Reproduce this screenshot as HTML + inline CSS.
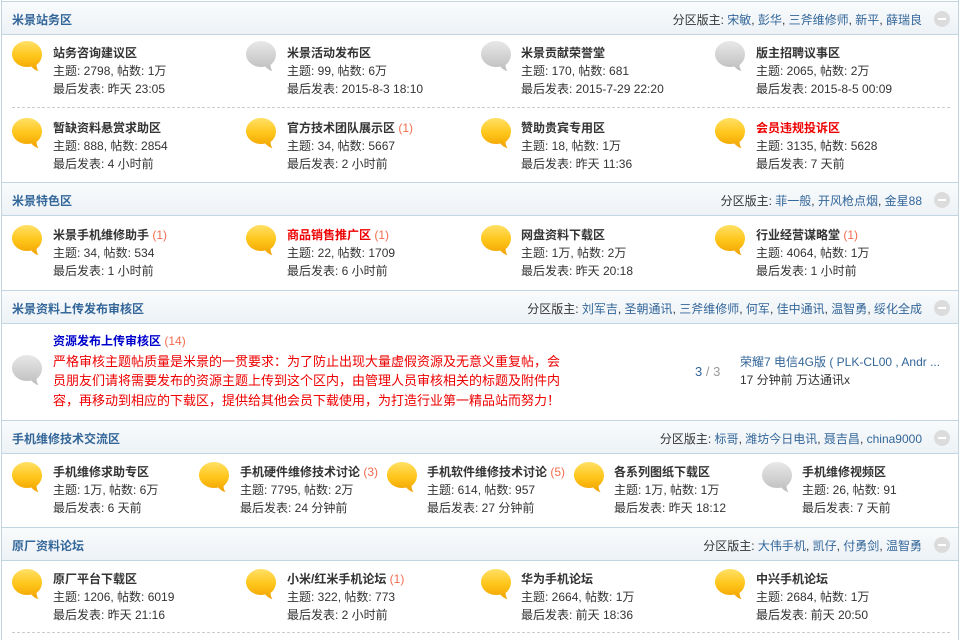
<!DOCTYPE html>
<html><head><meta charset="utf-8"><style>
*{margin:0;padding:0;box-sizing:border-box}
body{width:961px;height:636px;overflow:hidden;background:#fff;font-family:"Liberation Sans","Noto Sans CJK SC",sans-serif;font-size:12px;color:#333;position:relative}
#wrap{position:absolute;left:1px;top:0;width:958px;height:640px;border-left:1px solid #c2d5e3;border-right:1px solid #c2d5e3}
.h{position:absolute;left:0;width:956px;height:34px;border-top:1px solid #c2d5e3;border-bottom:1px solid #c2d5e3;background:linear-gradient(#f9fbfc,#edf2f6)}
.h b{position:absolute;left:10px;top:9px;font-size:12px;color:#336699;font-weight:bold}
.h .m{position:absolute;right:36px;top:9px;color:#333}
.h .m a{color:#336699}
.h i{position:absolute;right:8px;top:9px;width:16px;height:16px;border-radius:50%;background:#dcdcdc}
.h i:after{content:"";position:absolute;left:4px;top:7px;width:8px;height:2px;background:#fff}
.it{position:absolute;line-height:18px;white-space:nowrap}
.it .t{font-weight:bold;color:#333}
.it .t.r{color:#e00}
.it span.n{color:#f26c4f;font-weight:normal}
.ic{position:absolute;width:32px;height:32px}
.d{position:absolute;left:10px;width:938px;border-top:1px dashed #cdcdcd}
</style></head><body>
<svg width="0" height="0" style="position:absolute"><defs>
<linearGradient id="y" x1="0" y1="0" x2="0" y2="1"><stop offset="0" stop-color="#ffe066"/><stop offset=".5" stop-color="#ffc61a"/><stop offset="1" stop-color="#f0a000"/></linearGradient>
<linearGradient id="g" x1="0" y1="0" x2="0" y2="1"><stop offset="0" stop-color="#e8e8e8"/><stop offset="1" stop-color="#bdbdbd"/></linearGradient>
<symbol id="by" viewBox="0 0 32 32"><path d="M16 1C7.7 1 1 6.9 1 14s6.7 13 15 13c1.5 0 2.9-.2 4.3-.5 1.8 2.2 4.2 3.9 7.2 4.7-1.3-1.9-2-4-1.9-6.3C29 22.4 31 18.5 31 14 31 6.9 24.3 1 16 1z" fill="url(#y)"/></symbol>
<symbol id="bg" viewBox="0 0 32 32"><path d="M16 1C7.7 1 1 6.9 1 14s6.7 13 15 13c1.5 0 2.9-.2 4.3-.5 1.8 2.2 4.2 3.9 7.2 4.7-1.3-1.9-2-4-1.9-6.3C29 22.4 31 18.5 31 14 31 6.9 24.3 1 16 1z" fill="url(#g)"/></symbol>
</defs></svg>
<div id="wrap">
<div class="h" style="top:1px"><b>米景站务区</b><span class="m">分区版主: <a>宋敏</a>, <a>彭华</a>, <a>三斧维修师</a>, <a>新平</a>, <a>薛瑞良</a></span><i></i></div>
<div class="h" style="top:182px"><b>米景特色区</b><span class="m">分区版主: <a>菲一般</a>, <a>开风枪点烟</a>, <a>金星88</a></span><i></i></div>
<div class="h" style="top:290px"><b>米景资料上传发布审核区</b><span class="m">分区版主: <a>刘军吉</a>, <a>圣朝通讯</a>, <a>三斧维修师</a>, <a>何军</a>, <a>佳中通讯</a>, <a>温智勇</a>, <a>绥化全成</a></span><i></i></div>
<div class="h" style="top:420px"><b>手机维修技术交流区</b><span class="m">分区版主: <a>标哥</a>, <a>潍坊今日电讯</a>, <a>聂吉昌</a>, <a>china9000</a></span><i></i></div>
<div class="h" style="top:527px"><b>原厂资料论坛</b><span class="m">分区版主: <a>大伟手机</a>, <a>凯仔</a>, <a>付勇剑</a>, <a>温智勇</a></span><i></i></div>
<div class="d" style="top:107px"></div>
<div class="d" style="top:632px"></div>
</div>

<svg class="ic" style="left:11px;top:40px"><use href="#by" width="32" height="32"/></svg>
<div class="it" style="left:53px;top:44px"><div class="t">站务咨询建议区</div><div>主题: 2798, 帖数: 1万</div><div>最后发表: 昨天 23:05</div></div>
<svg class="ic" style="left:245px;top:40px"><use href="#bg" width="32" height="32"/></svg>
<div class="it" style="left:287px;top:44px"><div class="t">米景活动发布区</div><div>主题: 99, 帖数: 6万</div><div>最后发表: 2015-8-3 18:10</div></div>
<svg class="ic" style="left:480px;top:40px"><use href="#bg" width="32" height="32"/></svg>
<div class="it" style="left:521px;top:44px"><div class="t">米景贡献荣誉堂</div><div>主题: 170, 帖数: 681</div><div>最后发表: 2015-7-29 22:20</div></div>
<svg class="ic" style="left:714px;top:40px"><use href="#bg" width="32" height="32"/></svg>
<div class="it" style="left:756px;top:44px"><div class="t">版主招聘议事区</div><div>主题: 2065, 帖数: 2万</div><div>最后发表: 2015-8-5 00:09</div></div>

<svg class="ic" style="left:11px;top:117px"><use href="#by" width="32" height="32"/></svg>
<div class="it" style="left:53px;top:119px"><div class="t">暂缺资料悬赏求助区</div><div>主题: 888, 帖数: 2854</div><div>最后发表: 4 小时前</div></div>
<svg class="ic" style="left:245px;top:117px"><use href="#by" width="32" height="32"/></svg>
<div class="it" style="left:287px;top:119px"><div class="t">官方技术团队展示区 <span class="n">(1)</span></div><div>主题: 34, 帖数: 5667</div><div>最后发表: 2 小时前</div></div>
<svg class="ic" style="left:480px;top:117px"><use href="#by" width="32" height="32"/></svg>
<div class="it" style="left:521px;top:119px"><div class="t">赞助贵宾专用区</div><div>主题: 18, 帖数: 1万</div><div>最后发表: 昨天 11:36</div></div>
<svg class="ic" style="left:714px;top:117px"><use href="#by" width="32" height="32"/></svg>
<div class="it" style="left:756px;top:119px"><div class="t r">会员违规投诉区</div><div>主题: 3135, 帖数: 5628</div><div>最后发表: 7 天前</div></div>

<svg class="ic" style="left:11px;top:224px"><use href="#by" width="32" height="32"/></svg>
<div class="it" style="left:53px;top:226px"><div class="t">米景手机维修助手 <span class="n">(1)</span></div><div>主题: 34, 帖数: 534</div><div>最后发表: 1 小时前</div></div>
<svg class="ic" style="left:245px;top:224px"><use href="#by" width="32" height="32"/></svg>
<div class="it" style="left:287px;top:226px"><div class="t r">商品销售推广区 <span class="n">(1)</span></div><div>主题: 22, 帖数: 1709</div><div>最后发表: 6 小时前</div></div>
<svg class="ic" style="left:480px;top:224px"><use href="#by" width="32" height="32"/></svg>
<div class="it" style="left:521px;top:226px"><div class="t">网盘资料下载区</div><div>主题: 1万, 帖数: 2万</div><div>最后发表: 昨天 20:18</div></div>
<svg class="ic" style="left:714px;top:224px"><use href="#by" width="32" height="32"/></svg>
<div class="it" style="left:756px;top:226px"><div class="t">行业经营谋略堂 <span class="n">(1)</span></div><div>主题: 4064, 帖数: 1万</div><div>最后发表: 1 小时前</div></div>

<svg class="ic" style="left:11px;top:354px"><use href="#bg" width="32" height="32"/></svg>
<div class="it" style="left:53px;top:332px;line-height:19.5px"><div class="t" style="color:#0000cc">资源发布上传审核区 <span class="n">(14)</span></div><div style="color:#e00;font-size:13px">严格审核主题帖质量是米景的一贯要求：为了防止出现大量虚假资源及无意义重复帖，会<br>员朋友们请将需要发布的资源主题上传到这个区内，由管理人员审核相关的标题及附件内<br>容，再移动到相应的下载区，提供给其他会员下载使用，为打造行业第一精品站而努力！</div></div>
<div class="it" style="left:695px;top:363px;color:#336699;font-size:13px">3 <span style="color:#999">/ 3</span></div>
<div class="it" style="left:740px;top:353px"><div style="color:#336699">荣耀7 电信4G版 ( PLK-CL00 , Andr ...</div><div>17 分钟前 万达通讯x</div></div>

<svg class="ic" style="left:11px;top:461px"><use href="#by" width="32" height="32"/></svg>
<div class="it" style="left:53px;top:463px"><div class="t">手机维修求助专区</div><div>主题: 1万, 帖数: 6万</div><div>最后发表: 6 天前</div></div>
<svg class="ic" style="left:198px;top:461px"><use href="#by" width="32" height="32"/></svg>
<div class="it" style="left:240px;top:463px"><div class="t">手机硬件维修技术讨论 <span class="n">(3)</span></div><div>主题: 7795, 帖数: 2万</div><div>最后发表: 24 分钟前</div></div>
<svg class="ic" style="left:386px;top:461px"><use href="#by" width="32" height="32"/></svg>
<div class="it" style="left:427px;top:463px"><div class="t">手机软件维修技术讨论 <span class="n">(5)</span></div><div>主题: 614, 帖数: 957</div><div>最后发表: 27 分钟前</div></div>
<svg class="ic" style="left:573px;top:461px"><use href="#by" width="32" height="32"/></svg>
<div class="it" style="left:614px;top:463px"><div class="t">各系列图纸下载区</div><div>主题: 1万, 帖数: 1万</div><div>最后发表: 昨天 18:12</div></div>
<svg class="ic" style="left:761px;top:461px"><use href="#bg" width="32" height="32"/></svg>
<div class="it" style="left:802px;top:463px"><div class="t">手机维修视频区</div><div>主题: 26, 帖数: 91</div><div>最后发表: 7 天前</div></div>

<svg class="ic" style="left:11px;top:568px"><use href="#by" width="32" height="32"/></svg>
<div class="it" style="left:53px;top:570px"><div class="t">原厂平台下载区</div><div>主题: 1206, 帖数: 6019</div><div>最后发表: 昨天 21:16</div></div>
<svg class="ic" style="left:245px;top:568px"><use href="#by" width="32" height="32"/></svg>
<div class="it" style="left:287px;top:570px"><div class="t">小米/红米手机论坛 <span class="n">(1)</span></div><div>主题: 322, 帖数: 773</div><div>最后发表: 2 小时前</div></div>
<svg class="ic" style="left:480px;top:568px"><use href="#by" width="32" height="32"/></svg>
<div class="it" style="left:521px;top:570px"><div class="t">华为手机论坛</div><div>主题: 2664, 帖数: 1万</div><div>最后发表: 前天 18:36</div></div>
<svg class="ic" style="left:714px;top:568px"><use href="#by" width="32" height="32"/></svg>
<div class="it" style="left:756px;top:570px"><div class="t">中兴手机论坛</div><div>主题: 2684, 帖数: 1万</div><div>最后发表: 前天 20:50</div></div>
</body></html>
